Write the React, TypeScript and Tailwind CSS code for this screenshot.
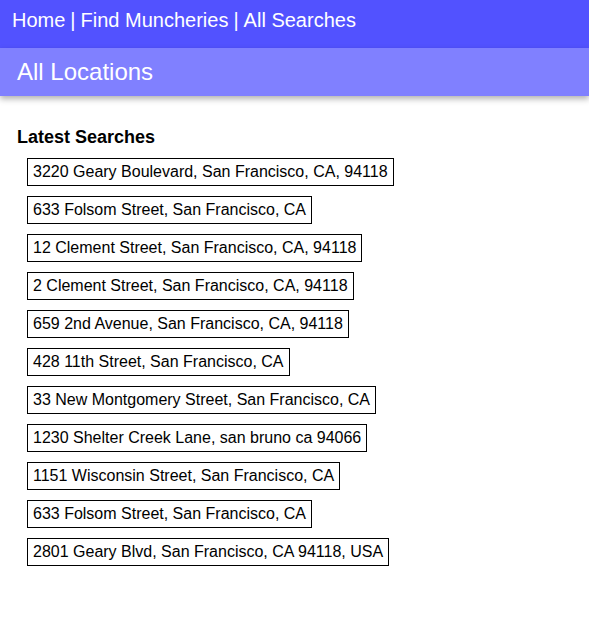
import React from 'react';

const searches = [
  '3220 Geary Boulevard, San Francisco, CA, 94118',
  '633 Folsom Street, San Francisco, CA',
  '12 Clement Street, San Francisco, CA, 94118',
  '2 Clement Street, San Francisco, CA, 94118',
  '659 2nd Avenue, San Francisco, CA, 94118',
  '428 11th Street, San Francisco, CA',
  '33 New Montgomery Street, San Francisco, CA',
  '1230 Shelter Creek Lane, san bruno ca 94066',
  '1151 Wisconsin Street, San Francisco, CA',
  '633 Folsom Street, San Francisco, CA',
  '2801 Geary Blvd, San Francisco, CA 94118, USA',
];

const App = () => {
  return (
    <div className="min-h-[624px] bg-white font-['Liberation_Sans',Arial,sans-serif] text-black">
      <nav className="h-12 bg-[#5252ff] flex items-start pt-[8px] px-3 text-white text-[20px] leading-[24px]">
        <a href="#">Home</a>
        <span className="mx-[5px]">|</span>
        <a href="#">Find Muncheries</a>
        <span className="mx-[5px]">|</span>
        <a href="#">All Searches</a>
      </nav>
      <header className="h-12 bg-[#8080ff] flex items-center px-[17px] text-white text-[24px] shadow-[0_3px_6px_rgba(0,0,0,0.3)]">
        All Locations
      </header>

      <section className="px-[17px] pt-[30px]">
        <h3 className="text-[18px] font-bold leading-[22px]">Latest Searches</h3>
        <ul className="mt-[10px] pl-[10px] flex flex-col items-start gap-[10px]">
          {searches.map((s, i) => (
            <li key={i} className="border border-black px-[5px] py-[4px] text-[16px] leading-[18px]">
              {s}
            </li>
          ))}
        </ul>
      </section>
    </div>
  );
};

export default App;
